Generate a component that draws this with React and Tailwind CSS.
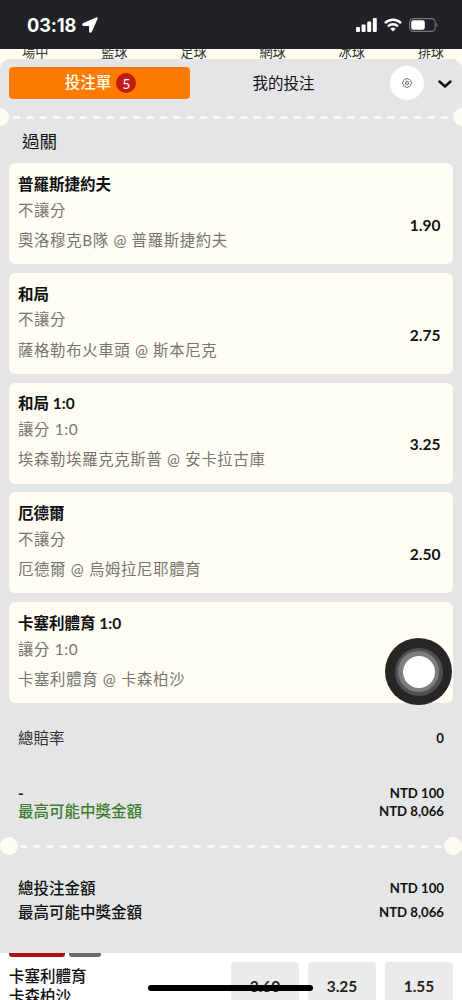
import React from "react";

const sports = ["場中", "籃球", "足球", "網球", "冰球", "排球"];

const bets = [
  { pick: "普羅斯捷約夫", market: "不讓分", match: "奧洛穆克B隊 @ 普羅斯捷約夫", odds: "1.90" },
  { pick: "和局", market: "不讓分", match: "薩格勒布火車頭 @ 斯本尼克", odds: "2.75" },
  { pick: "和局 1:0", market: "讓分 1:0", match: "埃森勒埃羅克克斯普 @ 安卡拉古庫", odds: "3.25" },
  { pick: "厄德爾", market: "不讓分", match: "厄德爾 @ 烏姆拉尼耶體育", odds: "2.50" },
  { pick: "卡塞利體育 1:0", market: "讓分 1:0", match: "卡塞利體育 @ 卡森柏沙", odds: "" },
];

function StatusBar() {
  return (
    <header className="flex h-[49px] shrink-0 items-center justify-between bg-[#212226] pt-[1px] pr-[24px] pl-[27px] text-white">
      <div className="flex items-center gap-[6px]">
        <span className="font-['Inter',sans-serif] text-[18.2px] leading-[20px] font-bold tracking-[-0.1px]">03:18</span>
        <svg width="16" height="16" viewBox="0 0 16 16" fill="currentColor">
          <path d="M14.200.4 1.200 6.100C-.4 6.900 0 8.900 1.700 8.900h5.400v5.400c0 1.700 2 2.100 2.800.5L15.600 1.800C16 .7 15.200 0 14.200.400Z" />
        </svg>
      </div>
      <div className="flex items-center gap-[7px]">
        <svg width="21" height="14" viewBox="0 0 21 14" fill="currentColor">
          <rect x="0" y="9" width="4" height="5" rx="1.100" />
          <rect x="5.600" y="6.500" width="4" height="7.500" rx="1.100" />
          <rect x="11.200" y="3.500" width="4" height="10.500" rx="1.100" />
          <rect x="16.800" y="0" width="4" height="14" rx="1.100" />
        </svg>
        <svg width="18" height="14" viewBox="0 0 18 14" fill="none" stroke="currentColor" strokeWidth="2.500">
          <path d="M1 5.100a11.500 11.500 0 0 1 16 0" />
          <path d="M4 8.300a7.200 7.200 0 0 1 10 0" />
          <path d="M9 13.500 6.300 10.700a3.900 3.900 0 0 1 5.400 0Z" fill="currentColor" stroke="none" />
        </svg>
        <svg width="29" height="14" viewBox="0 0 29 14">
          <rect x=".6" y=".6" width="25.600" height="12.800" rx="3.800" fill="none" stroke="#77787b" strokeWidth="1.100" />
          <rect x="2.200" y="2.200" width="13.600" height="9.600" rx="2.200" fill="#fff" />
          <path d="M27.400 4.800v4.400c1.500-.7 1.500-3.700 0-4.400Z" fill="#77787b" />
        </svg>
      </div>
    </header>
  );
}

function Tabs() {
  return (
    <div className="flex h-[32px] items-center pl-[9px]">
      <button className="flex h-[32px] w-[181px] items-center justify-center gap-[5px] rounded-[4px] bg-[#ff7b00] pl-[2px] text-[15.5px] font-medium text-[#fffdf2]">
        投注單
        <span className="flex size-[20px] items-center justify-center rounded-full bg-[#c41a14] text-[14px] font-normal text-white">5</span>
      </button>
      <button className="w-[187px] pt-[1px] text-center text-[15.5px]">我的投注</button>
      <button className="ml-[13px] flex size-[34px] items-center justify-center rounded-full bg-white">
        <svg width="10" height="10" viewBox="0 0 20 20" fill="none" stroke="#555" strokeWidth="1.500" strokeLinejoin="round">
          <path d="M8.300 1h3.400l.9 2.200 2.200-.9 2.400 2.400-.9 2.200 2.700 1.400v3.400l-2.700 1.400.9 2.200-2.400 2.400-2.200-.9-.9 2.200H8.300l-.9-2.200-2.200.9-2.400-2.400.9-2.200L1 11.700V8.300l2.700-1.400-.9-2.200 2.400-2.400 2.200.9Z" />
          <ellipse cx="10" cy="10" rx="3.200" ry="4" />
          <path d="M10 8.500v3" />
        </svg>
      </button>
      <svg className="mt-[2px] ml-[14px]" width="14" height="9" viewBox="0 0 14 9" fill="none" stroke="#111" strokeWidth="2.400" strokeLinecap="round" strokeLinejoin="round">
        <path d="m1.500 1.500 5.500 5 5.500-5" />
      </svg>
    </div>
  );
}

function Perforation({ inset = false }) {
  return (
    <div className={inset ? "flex h-[18px] items-center justify-between" : "-mx-[9px] flex h-[18px] items-center justify-between"}>
      <i className="size-[18px] shrink-0 rounded-full bg-[#fffdf2]" />
      <svg className="mt-[1px] h-[3px] min-w-0 flex-1">
        <line x1={inset ? "2" : "4"} y1="1.500" x2="100%" y2="1.500" stroke="#fffdf7" strokeWidth="2.600" strokeDasharray="7 6.370" />
      </svg>
      <i className="size-[18px] shrink-0 rounded-full bg-[#fffdf2]" />
    </div>
  );
}

function BetCard({ bet }) {
  return (
    <li className="flex h-[101.200px] justify-between rounded-[6px] bg-[#fffdf4] pr-[12.500px] pl-[9px]">
      <div className="pt-[8.800px]">
        <h3 className="h-[24px] text-[15.500px] leading-[24px] font-bold text-[#111]">{bet.pick}</h3>
        <p className="mt-[1.800px] h-[24px] text-[15.400px] leading-[24px] tracking-[0.66px] text-[#77756f]">{bet.market}</p>
        <p className="mt-[6.200px] h-[24px] text-[15.400px] leading-[24px] tracking-[0.66px] text-[#77756f]">{bet.match}</p>
      </div>
      <span className="pt-[49.800px] text-[15.500px] leading-[24px] font-bold text-[#111]">{bet.odds}</span>
    </li>
  );
}

function SummaryRow({ label, value, className }) {
  return (
    <div className={`flex items-center justify-between px-[18px] ${className}`}>
      <span className="text-[15.5px]">{label}</span>
      <span className="text-[13.2px] font-bold text-[#111]">{value}</span>
    </div>
  );
}

export default function App() {
  return (
    <div
      lang="zh-Hant"
      className="relative flex h-[1000px] w-[462px] flex-col overflow-hidden bg-white font-['Lato','Noto_Sans_CJK_TC',sans-serif] text-[#111]"
    >
      <StatusBar />
      <nav className="flex h-[10px] shrink-0 items-center justify-between overflow-hidden bg-[#fffdf2] pr-[18px] pl-[22px] text-[13.2px] leading-[20px] text-[#333]">
        {sports.map((s) => (
          <span key={s} className="-mt-[4px]">{s}</span>
        ))}
      </nav>
      <div className="flex h-[894px] shrink-0 flex-col bg-[#fffdf2]">
        <section className="flex h-full flex-col overflow-hidden rounded-t-[10px] bg-[#e4e5e7] pt-[8px]">
          <Tabs />
          <div className="mt-[8.5px]">
            <Perforation />
          </div>
          <h2 className="mt-[3.5px] h-[26px] pl-[22px] text-[17.6px] leading-[26px]">過關</h2>
          <ul className="mt-[8.2px] flex flex-col gap-[8.500px] px-[9px]">
            {bets.map((b) => (
              <BetCard key={b.match} bet={b} />
            ))}
          </ul>
          <SummaryRow label="總賠率" value="0" className="mt-[25.800px] h-[20px] text-[#333]" />
          <SummaryRow label="-" value="NTD 100" className="mt-[36px] h-[18px] font-bold" />
          <SummaryRow label="最高可能中獎金額" value="NTD 8,066" className="h-[18px] font-medium text-[#3c7d2c]" />
          <div className="mt-[16px]">
            <Perforation inset />
          </div>
          <SummaryRow label="總投注金額" value="NTD 100" className="mt-[22px] h-[24px] font-medium" />
          <SummaryRow label="最高可能中獎金額" value="NTD 8,066" className="h-[24px] font-medium" />
        </section>
      </div>
      <footer className="flex h-[47px] shrink-0 justify-between overflow-hidden bg-white px-[9px]">
        <div>
          <div className="flex gap-[4px]">
            <i className="h-[4px] w-[56px] rounded-b-[3px] bg-[#b01010]" />
            <i className="h-[4px] w-[32px] rounded-b-[3px] bg-[#696a6c]" />
          </div>
          <p className="mt-[9px] h-[20px] text-[15.5px] leading-[20px] font-medium">卡塞利體育</p>
          <p className="h-[20px] text-[15.5px] leading-[20px] font-medium">卡森柏沙</p>
        </div>
        <div className="flex gap-[9px] pt-[9px]">
          {["3.60", "3.25", "1.55"].map((o) => (
            <button key={o} className="h-[50px] w-[68px] rounded-[4px] bg-[#ebebeb] text-[15.4px] font-bold text-[#222]">
              {o}
            </button>
          ))}
        </div>
      </footer>
      <div className="absolute top-[985px] left-[148px] h-[6px] w-[165px] rounded-full bg-black" />
      <div className="absolute top-[638px] left-[385px] flex size-[67px] items-center justify-center rounded-full bg-[#272625]">
        <div className="flex size-[48px] items-center justify-center rounded-full bg-[#505050]">
          <div className="flex size-[41px] items-center justify-center rounded-full bg-[#7d7d7d]">
            <div className="size-[32px] rounded-full bg-white" />
          </div>
        </div>
      </div>
    </div>
  );
}
